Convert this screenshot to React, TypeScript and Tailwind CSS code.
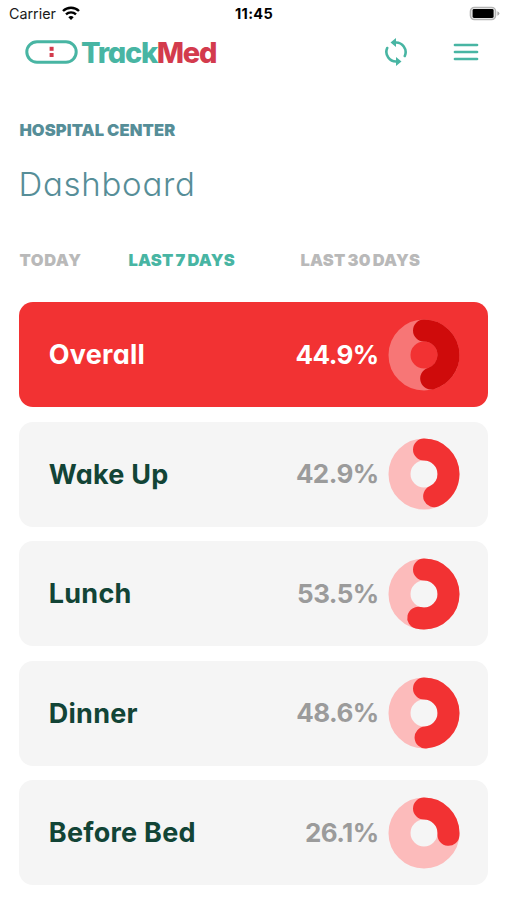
type Meal = {
  label: string;
  percent: number;
  highlighted?: boolean;
};

const meals: Meal[] = [
  { label: 'Overall', percent: 44.9, highlighted: true },
  { label: 'Wake Up', percent: 42.9 },
  { label: 'Lunch', percent: 53.5 },
  { label: 'Dinner', percent: 48.6 },
  { label: 'Before Bed', percent: 26.1 },
];

function StatusBar() {
  return (
    <div className="grid h-7 grid-cols-3 items-center pl-[9px] pr-[7px] leading-none text-[#1a1a1a] [font-feature-settings:normal]">
      <div className="flex items-center gap-[6px]">
        <span className="text-[14.3px]">Carrier</span>
        <svg className="-mt-0.5" width="18" height="14" viewBox="0 0 18 14" fill="none" stroke="#000" strokeWidth="2.4">
          <path d="M1 5a11.4 11.4 0 0 1 16 0" />
          <path d="M4 8.4a7.2 7.2 0 0 1 10 0" />
          <path d="M9 14 6.3 11.2a4 4 0 0 1 5.4 0Z" fill="#000" stroke="none" />
        </svg>
      </div>
      <span className="-ml-px text-center text-[14.5px] font-bold tracking-[0.3px] text-black">11:45</span>
      <svg className="-mt-0.5 justify-self-end" width="31" height="15" viewBox="0 0 31 15">
        <rect x="1.4" y="1.4" width="25.2" height="12.2" rx="4" fill="#e4e4e4" stroke="#b4b4b4" strokeWidth="1.4" />
        <rect x="3.6" y="3" width="21" height="9" rx="1.4" fill="#000" />
        <path d="M28.4 5.2q2 .8 2 2.3t-2 2.3Z" fill="#a8a8a8" />
      </svg>
    </div>
  );
}

function Logo() {
  return (
    <div className="flex items-center gap-[3px]">
      <svg width="53" height="24" viewBox="0 0 53 24">
        <rect x="1.8" y="1.8" width="49.4" height="20.4" rx="10.2" fill="none" stroke="#48b5a3" strokeWidth="3" />
        <rect x="24.6" y="6.8" width="4" height="4" fill="#d33b4d" />
        <rect x="24.6" y="13" width="4" height="4" fill="#d33b4d" />
      </svg>
      <span className="text-[29px] font-extrabold leading-none tracking-[-1.3px] text-[#48b5a3]">
        Track<span className="text-[#d33b4d]">Med</span>
      </span>
    </div>
  );
}

function Header() {
  return (
    <header className="flex h-12 items-center justify-between pl-[25px] pr-[28px]">
      <Logo />
      <div className="flex items-center gap-[45px]">
        <svg width="24" height="30" viewBox="0 0 24 30" fill="none" stroke="#48b5a3" strokeWidth="2.6">
          <path d="M11 5.5A9.7 9.7 0 0 1 20.8 19" strokeLinecap="round" />
          <path d="M13 24.5A9.7 9.7 0 0 1 3.2 11" strokeLinecap="round" />
          <path d="M6.5 5.5 12 1v9ZM17.5 24.5 12 20v9Z" fill="#48b5a3" stroke="none" />
        </svg>
        <svg width="26" height="18" viewBox="0 0 26 18" fill="none" stroke="#48b5a3" strokeWidth="2.7" strokeLinecap="round">
          <path d="M2 2h22M2 9h22M2 16h22" />
        </svg>
      </div>
    </header>
  );
}

function Tabs() {
  return (
    <nav className="mt-[46px] flex text-[16.5px] font-black leading-5 tracking-[0.2px] [word-spacing:-1.5px] text-[#b9b9b9]">
      <span className="w-[109px] tracking-[0.6px]">TODAY</span>
      <span className="w-[172px] text-[#48b5a3]">LAST 7 DAYS</span>
      <span>LAST 30 DAYS</span>
    </nav>
  );
}

function Ring({ percent, highlighted }: { percent: number; highlighted?: boolean }) {
  const radius = 24.5;
  const length = 2 * Math.PI * radius;

  return (
    <svg width="72" height="72" viewBox="-36 -36 72 72" fill="none" strokeWidth="22">
      <circle r={radius} stroke={highlighted ? '#f77676' : '#fcbbbb'} />
      <circle
        r={radius}
        stroke={highlighted ? '#cf0b0b' : '#f23233'}
        strokeLinecap="round"
        strokeDasharray={`${(length * percent) / 100} ${length}`}
        transform="rotate(-90)"
      />
    </svg>
  );
}

function MealCard({ label, percent, highlighted }: Meal) {
  return (
    <div
      className={`flex h-[105px] items-center rounded-[14px] pl-[29.4px] pr-[28.4px] text-[26px] leading-none ${
        highlighted ? 'bg-[#f23233] text-white' : 'bg-[#f5f5f5] text-[#124436]'
      }`}
    >
      <span className="flex-1 text-[27px] font-[650] tracking-[0.25px]">{label}</span>
      <span
        className={`mr-[9.5px] font-bold tracking-[-0.6px] ${highlighted ? 'text-white' : 'text-[#9b9b9b]'}`}
      >
        {percent}%
      </span>
      <Ring percent={percent} highlighted={highlighted} />
    </div>
  );
}

export default function App() {
  return (
    <div className="h-[900px] w-[507px] overflow-hidden bg-white font-['Inter',sans-serif] [font-feature-settings:'cv11']">
      <StatusBar />
      <Header />
      <main className="pl-[19.4px] pr-[18.6px] pt-11">
        <h2 className="text-[16.5px] font-black leading-5 tracking-[0.1px] [word-spacing:-0.5px] text-[#568e98]">
          HOSPITAL CENTER
        </h2>
        <h1 className="-ml-px mt-6 text-[33px] font-light leading-10 tracking-[0.75px] text-[#568e98]">
          Dashboard
        </h1>
        <Tabs />
        <div className="mt-8 flex flex-col gap-[14.6px]">
          {meals.map((meal) => (
            <MealCard key={meal.label} {...meal} />
          ))}
        </div>
      </main>
    </div>
  );
}
